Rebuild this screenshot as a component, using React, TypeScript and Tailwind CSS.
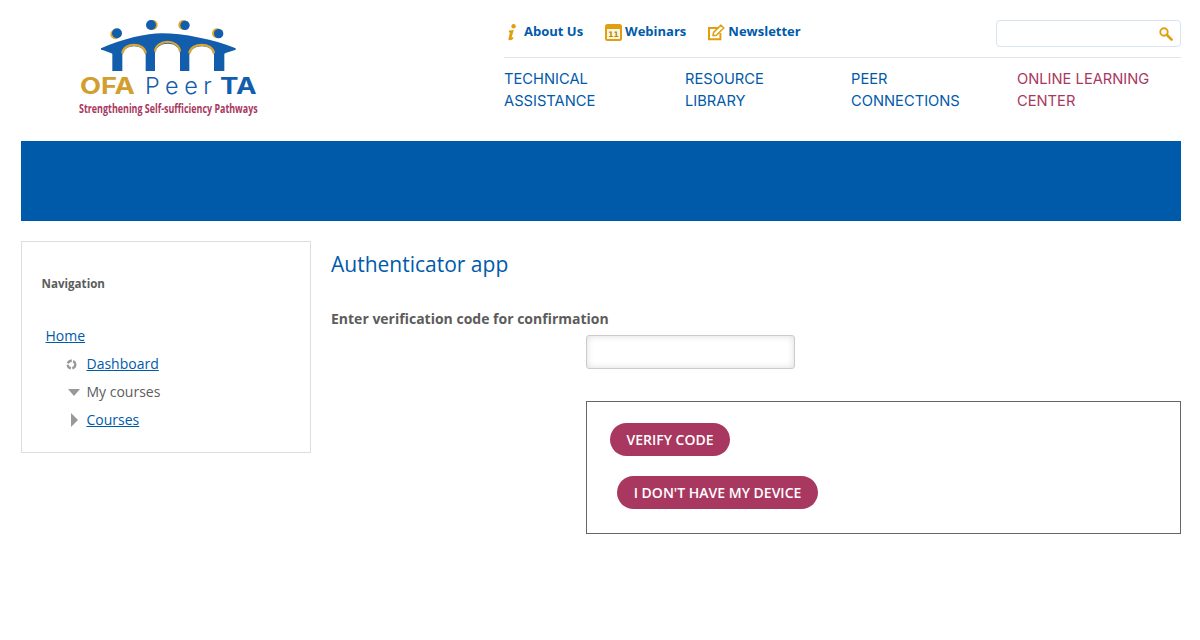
const sans = "font-['Open_Sans',sans-serif]"

function Logo() {
  return (
    <svg width="220" height="115" viewBox="0 0 660 345" className="block overflow-visible">
      <circle cx="166" cy="73" r="15" fill="#e0a92e" />
      <circle cx="171" cy="70" r="15" fill="#125dac" />
      <circle cx="278" cy="45" r="15" fill="#e0a92e" />
      <circle cx="273" cy="45" r="15" fill="#125dac" />
      <circle cx="370" cy="45" r="15" fill="#e0a92e" />
      <circle cx="375" cy="46" r="14" fill="#125dac" />
      <circle cx="471" cy="70" r="15" fill="#e0a92e" />
      <circle cx="476" cy="71" r="14" fill="#125dac" />
      <path
        d="M123 115 C190 86 260 70 305 70 C370 70 460 88 527 115 L527 119 C510 124 500 127 493 131 L493 183 L462 183 L462 135 C460 100 392 100 388 135 L388 183 L360 183 L360 130 C358 92 288 92 285 130 L285 183 L257 183 L257 135 C255 100 190 100 187 135 L187 183 L157 183 L157 131 C150 127 135 122 123 119 Z"
        fill="#125dac"
      />
      <path d="M187 130 C190 96 254 96 257 130" fill="none" stroke="#d9a534" strokeWidth="7" />
      <path d="M285 125 C288 86 357 86 360 125" fill="none" stroke="#d9a534" strokeWidth="7" />
      <path d="M388 130 C391 96 459 96 462 130" fill="none" stroke="#d9a534" strokeWidth="7" />
      <text x="60" y="252" textLength="165" lengthAdjust="spacingAndGlyphs" fontFamily="Inter, sans-serif" fontWeight="700" fontSize="68" fill="#d19e2f">OFA</text>
      <text x="255" y="252" textLength="200" lengthAdjust="spacing" fontFamily="Inter, sans-serif" fontWeight="300" fontSize="70" fill="#125dac">Peer</text>
      <text x="480" y="252" textLength="110" lengthAdjust="spacingAndGlyphs" fontFamily="Inter, sans-serif" fontWeight="700" fontSize="68" fill="#125dac">TA</text>
      <text x="57" y="308" textLength="536" lengthAdjust="spacingAndGlyphs" fontFamily="'Open Sans', sans-serif" fontWeight="700" fontSize="37" fill="#a93860">Strengthening Self-sufficiency Pathways</text>
    </svg>
  )
}

function InfoIcon() {
  return (
    <svg width="10" height="17" viewBox="0 0 10 17" className="shrink-0">
      <circle cx="6.6" cy="2.2" r="2.2" fill="#e0a00e" />
      <path d="M2 6.5 L6.8 6 L4.6 13.6 L6.4 13 L6 15 C4 16.4 1.4 16.8 1.4 15 L3 8.4 L1.8 8.4 Z" fill="#e0a00e" />
    </svg>
  )
}

function CalendarIcon() {
  return (
    <svg width="17" height="17" viewBox="0 0 17 17" className="shrink-0">
      <rect x="0" y="0" width="17" height="17" rx="2.5" fill="#e0a00e" />
      <rect x="2" y="5" width="13" height="10" fill="#fdf6e3" />
      <text x="8.5" y="13" textAnchor="middle" fontFamily="'DejaVu Sans', sans-serif" fontWeight="700" fontSize="7.5" fill="#b98408">11</text>
    </svg>
  )
}

function NoteIcon() {
  return (
    <svg width="17" height="17" viewBox="0 0 17 17" className="shrink-0">
      <path d="M11 4 H1 V15.2 H12.4 V9" fill="none" stroke="#e0a00e" strokeWidth="2" />
      <path d="M5 11.6 L5.6 8.4 L12.8 1.2 L15.8 4 L8.4 11.2 Z" fill="#fff" stroke="#e0a00e" strokeWidth="1.6" strokeLinejoin="round" />
    </svg>
  )
}

function SearchIcon() {
  return (
    <svg width="14" height="14" viewBox="0 0 14 14" className="shrink-0">
      <circle cx="5" cy="5" r="3.7" fill="none" stroke="#e0a00e" strokeWidth="1.9" />
      <path d="M8 8 L12.6 12.6" stroke="#e0a00e" strokeWidth="2.6" strokeLinecap="round" />
    </svg>
  )
}

function UtilityLinks() {
  return (
    <div className="flex items-start h-[41px] pt-[4px] text-[13px] font-bold text-[#005aaa]">
      <div className="flex items-center h-[24px]">
        <a className="flex items-center pl-[3px]">
          <InfoIcon />
          <span className="ml-[7px]">About Us</span>
        </a>
        <a className="flex items-center gap-[3px] ml-[22px]">
          <CalendarIcon />
          <span>Webinars</span>
        </a>
        <a className="flex items-center gap-[3px] ml-[22px]">
          <NoteIcon />
          <span>Newsletter</span>
        </a>
      </div>
      <div className="ml-auto w-[185px] h-[27px] flex items-center justify-end pr-[7px] border border-[#d8e4f0] rounded-[4px]">
        <SearchIcon />
      </div>
    </div>
  )
}

function MainNav() {
  const items = [
    { lines: ['TECHNICAL', 'ASSISTANCE'], width: 'w-[181px]', color: 'text-[#005aaa]' },
    { lines: ['RESOURCE', 'LIBRARY'], width: 'w-[166px]', color: 'text-[#005aaa]' },
    { lines: ['PEER', 'CONNECTIONS'], width: 'w-[166px]', color: 'text-[#005aaa]' },
    { lines: ['ONLINE LEARNING', 'CENTER'], width: 'w-[164px]', color: 'text-[#a93860]' },
  ]
  return (
    <div className="flex mt-[10px] font-['Inter',sans-serif] text-[14.7px] leading-[22px]">
      {items.map((item) => (
        <a key={item.lines[0]} className={`block ${item.width} ${item.color}`}>
          {item.lines[0]}
          <br />
          {item.lines[1]}
        </a>
      ))}
    </div>
  )
}

function Sidebar() {
  return (
    <aside className="w-[290px] h-[212px] shrink-0 border border-[#ddd] text-[14px] text-[#5c5c5c]">
      <h2 className="ml-[19.5px] mt-[34px] text-[11.6px] leading-[16px] font-bold">Navigation</h2>
      <ul className="mt-[30px] leading-[28px]">
        <li className="pl-[23.5px]">
          <a className="text-[#005aaa] underline">Home</a>
        </li>
        <li className="flex items-center pl-[43.5px]">
          <span className="w-[21px] flex">
            <svg width="11" height="11" viewBox="0 0 11 11">
              <circle cx="5.5" cy="5.5" r="3.8" fill="none" stroke="#999" strokeWidth="2.4" strokeDasharray="5 1.4" />
            </svg>
          </span>
          <a className="text-[#005aaa] underline">Dashboard</a>
        </li>
        <li className="flex items-center pl-[45.5px]">
          <span className="w-[19px] flex">
            <span className="w-0 h-0 border-x-[6px] border-x-transparent border-t-[7px] border-t-[#999]" />
          </span>
          My courses
        </li>
        <li className="flex items-center pl-[48.5px]">
          <span className="w-[16px] flex">
            <span className="w-0 h-0 border-y-[7px] border-y-transparent border-l-[7px] border-l-[#999]" />
          </span>
          <a className="text-[#005aaa] underline">Courses</a>
        </li>
      </ul>
    </aside>
  )
}

function VerifyForm() {
  return (
    <main className="flex-1 ml-[20px] text-[#5c5c5c]">
      <h1 className="mt-[8px] text-[21px] leading-[30px] text-[#005aaa]">Authenticator app</h1>
      <label className="block mt-[30px] text-[14px] leading-[20px] font-bold">
        Enter verification code for confirmation
      </label>
      <div className="ml-[255px] mt-[6px] w-[209px] h-[34px] bg-white border border-[#ccc] rounded-[3px] shadow-[inset_0_0_7px_rgba(0,0,0,0.14)]" />
      <div className="ml-[255px] mt-[32px] h-[133px] border border-[#666] pt-[21px]">
        <button className="block ml-[23px] h-[33px] w-[120px] rounded-full bg-[#a93860] text-white text-[14px] font-semibold">
          VERIFY CODE
        </button>
        <button className="block ml-[30px] mt-[20px] h-[33px] w-[201px] rounded-full bg-[#a93860] text-white text-[14px] font-semibold">
          I DON'T HAVE MY DEVICE
        </button>
      </div>
    </main>
  )
}

export default function App() {
  return (
    <div className={`w-[1200px] h-[640px] bg-white pl-[21px] pr-[19px] overflow-hidden ${sans}`}>
      <header className="flex h-[141px]">
        <div className="w-[483px] shrink-0 pl-[39px] pt-[10px]">
          <Logo />
        </div>
        <div className="flex-1 pt-[16px]">
          <UtilityLinks />
          <div className="border-t border-[#dde6ef]" />
          <MainNav />
        </div>
      </header>
      <div className="h-[80px] bg-[#005aaa]" />
      <div className="flex mt-[20px]">
        <Sidebar />
        <VerifyForm />
      </div>
    </div>
  )
}
